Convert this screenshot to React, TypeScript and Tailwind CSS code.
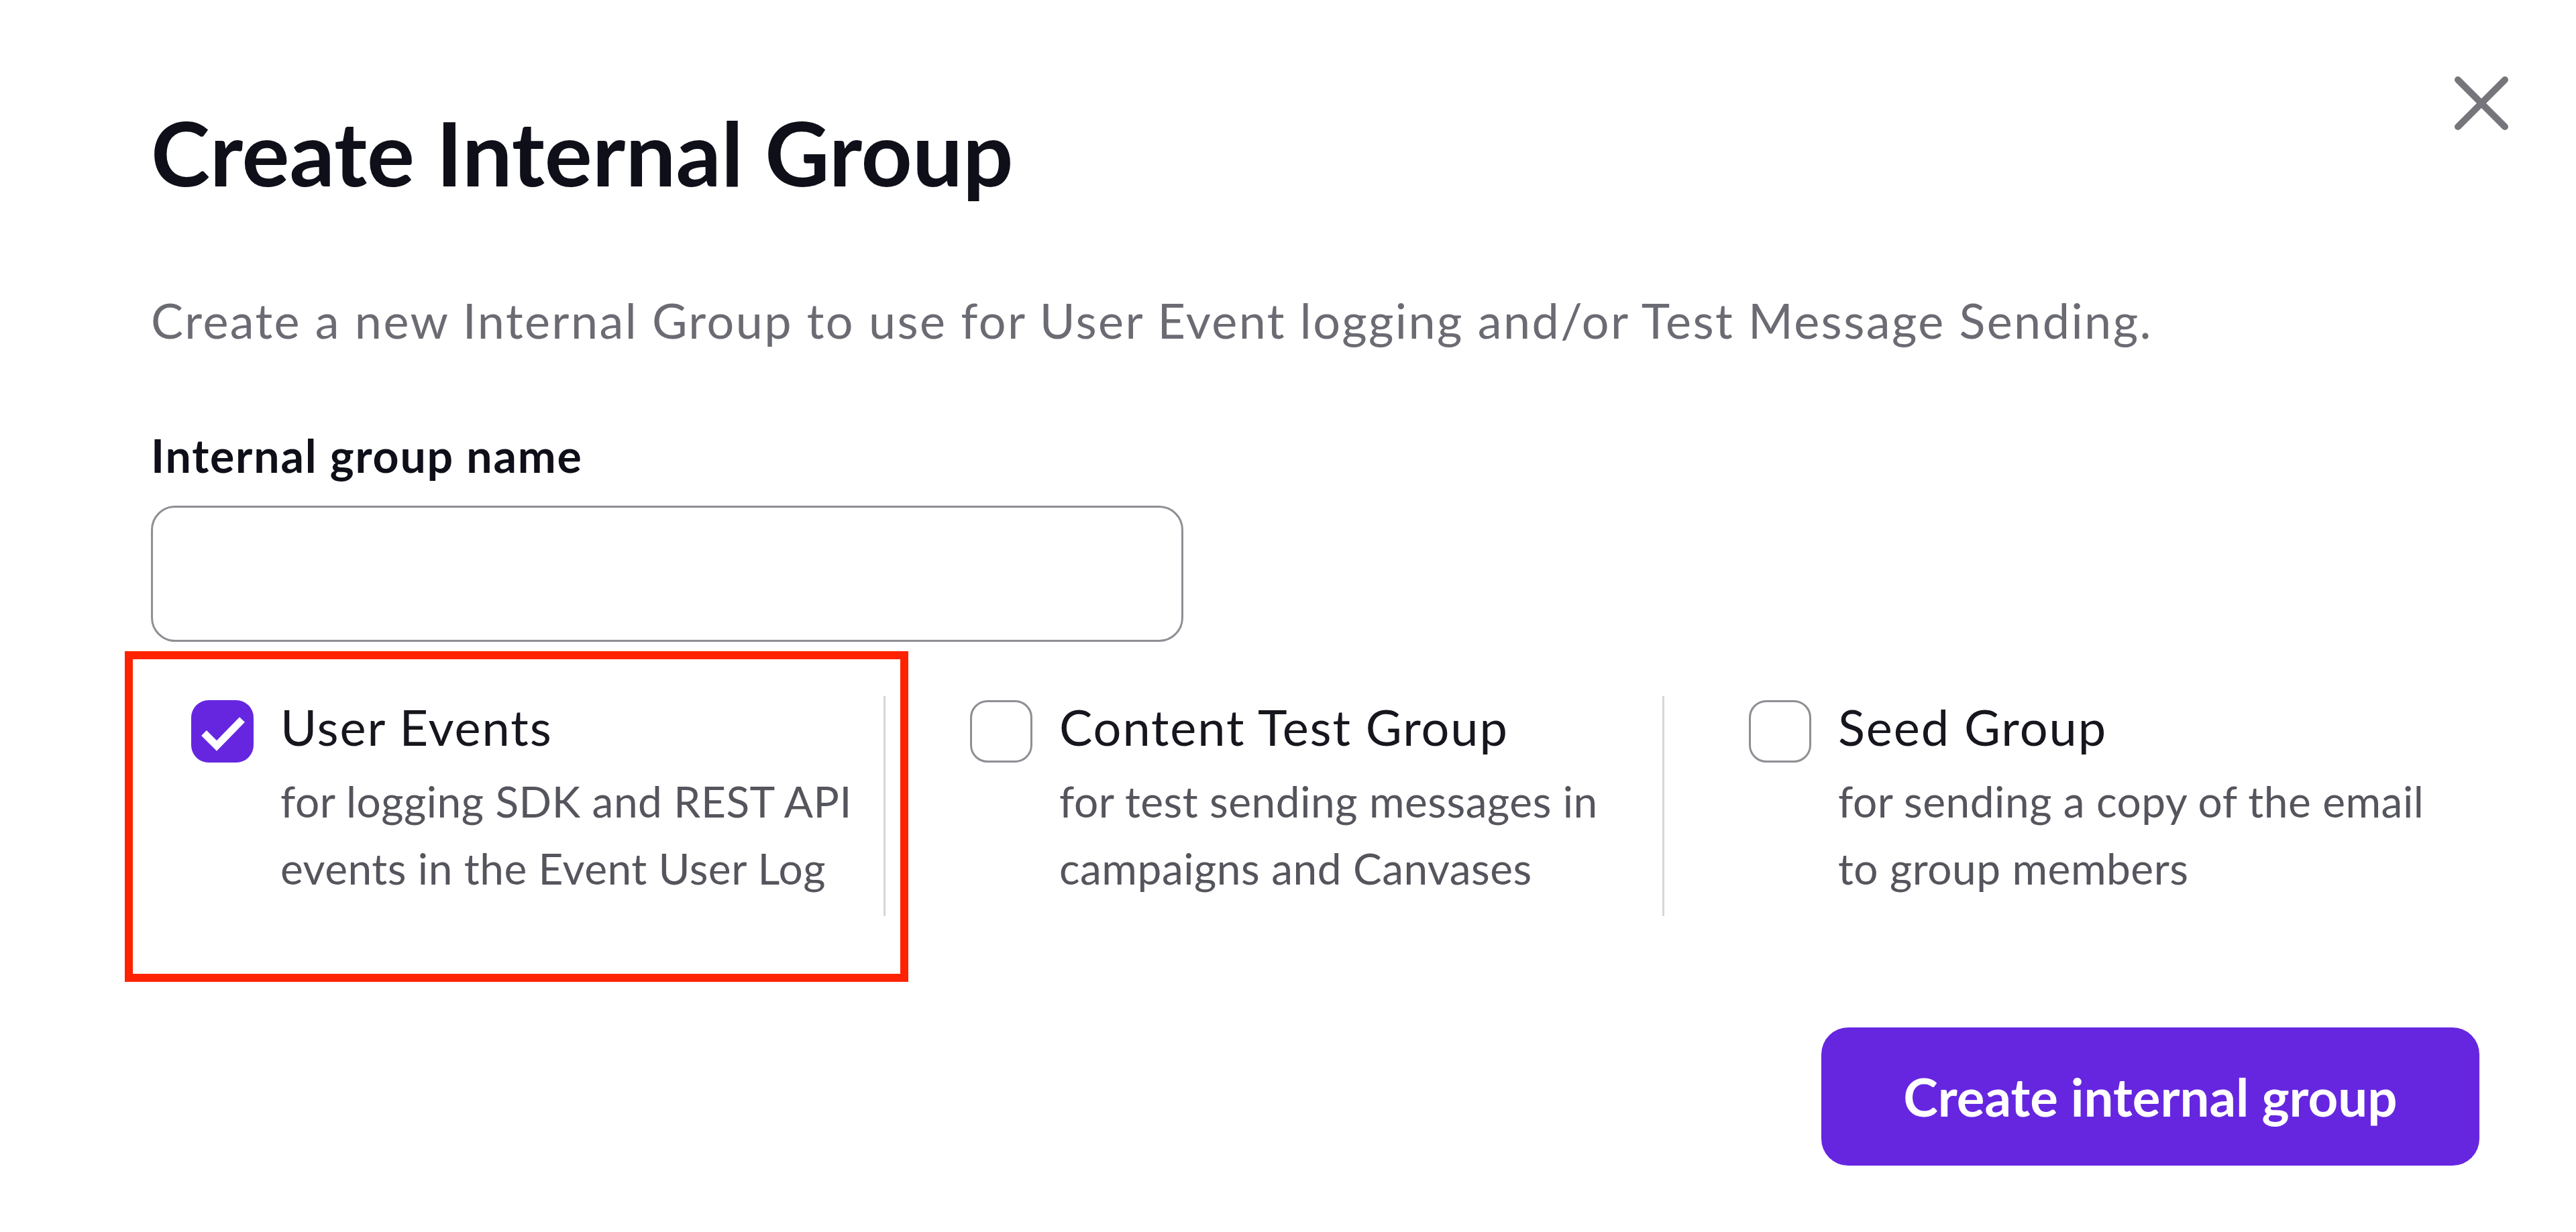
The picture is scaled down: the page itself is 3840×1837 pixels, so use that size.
import { useState } from "react";

interface GroupOption {
  id: string;
  title: string;
  lines: string[];
}

const OPTIONS: GroupOption[] = [
  { id: "user-events", title: "User Events", lines: ["for logging SDK and REST API", "events in the Event User Log"] },
  { id: "content-test", title: "Content Test Group", lines: ["for test sending messages in", "campaigns and Canvases"] },
  { id: "seed", title: "Seed Group", lines: ["for sending a copy of the email", "to group members"] },
];

function CheckBox({ checked }: { checked: boolean }) {
  if (!checked) {
    return <span className="block h-[93px] w-[93px] shrink-0 rounded-[26px] border-[3px] border-[#8e8e94] bg-white" />;
  }
  return (
    <span className="flex h-[93px] w-[93px] shrink-0 items-center justify-center rounded-[26px] bg-[#6626e0]">
      <svg viewBox="0 0 93 93" className="h-[93px] w-[93px]">
        <polyline points="19,49 38,68 76,29" fill="none" stroke="#fff" strokeWidth="11" />
      </svg>
    </span>
  );
}

export default function App() {
  const [name, setName] = useState("");
  const [selected, setSelected] = useState<string[]>(["user-events"]);

  const toggle = (id: string) =>
    setSelected((prev) => (prev.includes(id) ? prev.filter((x) => x !== id) : [...prev, id]));

  return (
    <div className="relative h-[1837px] w-full bg-white font-['Lato',sans-serif]">
      {/* close */}
      <button className="absolute left-[3658px] top-[113px] h-[82px] w-[82px]" aria-label="Close">
        <svg viewBox="0 0 82 82" className="h-[82px] w-[82px]">
          <path d="M6 6 L76 76 M76 6 L6 76" stroke="#75757b" strokeWidth="10" strokeLinecap="round" fill="none" />
        </svg>
      </button>

      <div className="flex flex-col pl-[225px] pr-[144px] pt-[160px]">
        <h1 className="text-[133px] font-bold leading-none text-[#0f0f19]">Create Internal Group</h1>

        <p className="mt-[148px] text-[72px] leading-none tracking-[2.4px] text-[#6b6b73]">
          Create a new Internal Group to use for User Event logging and/or Test Message Sending.
        </p>

        <label className="mt-[132px] text-[68px] font-bold leading-none tracking-[1.8px] text-[#0f0f19]">
          Internal group name
        </label>
        <input
          value={name}
          onChange={(e) => setName(e.target.value)}
          className="mt-[41px] h-[203px] w-[1539px] rounded-[36px] border-[3px] border-[#8e8e94] px-[40px] text-[66px] outline-none"
        />

        {/* group type options */}
        <div className="mt-[81px] flex gap-[66px]">
          {OPTIONS.map((opt, i) => (
            <div
              key={opt.id}
              onClick={() => toggle(opt.id)}
              className={
                "relative flex h-[328px] w-[1095px] cursor-pointer gap-[40px] pl-[60px] pt-[6px] " +
                (i < OPTIONS.length - 1 ? "border-r-[3px] border-[#d6d6da]" : "")
              }
            >
              {i === 0 && (
                <div className="pointer-events-none absolute -left-[39px] -top-[67px] h-[493px] w-[1168px] border-[12px] border-[#ff2200]" />
              )}
              <CheckBox checked={selected.includes(opt.id)} />
              <div className="flex flex-col pt-[3px]">
                <span className="text-[74px] leading-none tracking-[1.9px] text-[#16161e]">{opt.title}</span>
                <span className="mt-[24px] text-[64px] leading-[100px] tracking-[0.5px] text-[#55555d]">
                  {opt.lines.map((line) => (
                    <span key={line} className="block">
                      {line}
                    </span>
                  ))}
                </span>
              </div>
            </div>
          ))}
        </div>

        <div className="mt-[166px] flex justify-end">
          <button className="h-[206px] w-[981px] rounded-[40px] bg-[#6626e0] text-[78px] font-bold text-white">
            Create internal group
          </button>
        </div>
      </div>
    </div>
  );
}
